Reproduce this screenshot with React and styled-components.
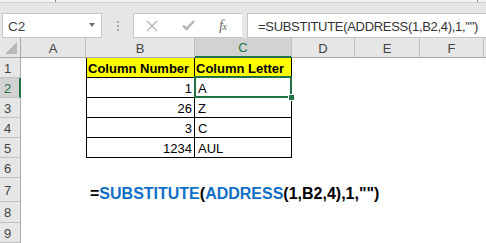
import React from 'react';
import styled, { createGlobalStyle } from 'styled-components';

const GlobalStyle = createGlobalStyle`
  html, body {
    margin: 0;
    padding: 0;
    background: #ffffff;
    overflow: hidden;
  }
  body {
    font-family: "Liberation Sans", Arial, sans-serif;
  }
`;

const GREEN = '#217346';

const Window = styled.div`
  width: 486px;
  height: 243px;
  overflow: hidden;
  display: flex;
  flex-direction: column;
  background: #ffffff;
`;

const TopStrip = styled.div`
  height: 4px;
  background: #f3f3f3;
  border-bottom: 1px solid #d2d2d2;
  display: flex;
  align-items: flex-start;
`;

const Tick = styled.span`
  display: block;
  width: 1px;
  height: 2px;
  background: #8a8a8a;
  margin-left: ${p => p.$at}px;
`;

const FormulaBar = styled.div`
  height: 45px;
  background: #e6e6e6;
  display: flex;
  align-items: flex-start;
  padding-top: 10px;
  box-sizing: border-box;
`;

const NameBox = styled.div`
  margin-left: 2px;
  width: 100px;
  height: 25px;
  box-sizing: border-box;
  background: #ffffff;
  border: 1px solid #c6c6c6;
  display: flex;
  align-items: center;
  justify-content: space-between;
  padding: 1px 6px 0 5px;
  font-size: 13.5px;
  color: #444444;
`;

const DropArrow = styled.span`
  width: 0;
  height: 0;
  border-left: 3.5px solid transparent;
  border-right: 3.5px solid transparent;
  border-top: 4px solid #6b6b6b;
  margin-bottom: 2px;
`;

const Grip = styled.div`
  width: 31px;
  height: 25px;
  display: flex;
  flex-direction: column;
  align-items: center;
  justify-content: center;
  gap: 2px;
  span {
    display: block;
    width: 2px;
    height: 2px;
    background: #a6a6a6;
  }
`;

const FxBox = styled.div`
  width: 109px;
  height: 25px;
  box-sizing: border-box;
  background: #ffffff;
  border: 1px solid #c6c6c6;
  border-right: none;
  display: flex;
  align-items: center;
  gap: 24px;
  padding-left: 12px;
`;

const FxLabel = styled.span`
  font-family: "Liberation Serif", "Times New Roman", serif;
  font-style: italic;
  font-size: 15px;
  color: #6a6a6a;
  letter-spacing: -1px;
  small {
    font-size: 11px;
  }
`;

const FormulaInput = styled.div`
  flex: 1;
  margin-left: 5px;
  height: 25px;
  box-sizing: border-box;
  background: #ffffff;
  border: 1px solid #c6c6c6;
  border-right: none;
  display: flex;
  align-items: center;
  padding: 1px 0 0 10px;
  font-size: 13px;
  letter-spacing: -0.3px;
  color: #333333;
  white-space: nowrap;
`;

const Sheet = styled.div`
  display: grid;
  grid-template-columns: 21px 65px 109px 97px 63px 65px 64px 1fr;
  grid-template-rows: 20px 20px 20px 20px 20px 20px 20px 24px 21px 20px;
  font-size: 13px;
`;

const Corner = styled.div`
  background: #e6e6e6;
  border-right: 1px solid #a8a8a8;
  border-bottom: 1px solid #a8a8a8;
  box-sizing: border-box;
  display: flex;
  align-items: flex-end;
  justify-content: flex-end;
  padding: 0 3px 3px 0;
  &::after {
    content: '';
    width: 0;
    height: 0;
    border-left: 12px solid transparent;
    border-bottom: 12px solid #b8b8b8;
  }
`;

const ColHeader = styled.div`
  background: ${p => (p.$active ? '#d2d2d2' : '#e6e6e6')};
  color: ${p => (p.$active ? GREEN : '#444444')};
  border-right: 1px solid #c0c0c0;
  border-bottom: ${p => (p.$active ? `2px solid ${GREEN}` : '1px solid #a8a8a8')};
  box-sizing: border-box;
  display: flex;
  align-items: center;
  justify-content: center;
  padding-top: 1px;
`;

const RowHeader = styled.div`
  background: ${p => (p.$active ? '#d2d2d2' : '#e6e6e6')};
  color: ${p => (p.$active ? GREEN : '#444444')};
  border-right: ${p => (p.$active ? `2px solid ${GREEN}` : '1px solid #a8a8a8')};
  border-bottom: 1px solid #c0c0c0;
  box-sizing: border-box;
  display: flex;
  align-items: center;
  justify-content: center;
  padding: 1px ${p => (p.$active ? 4 : 5)}px 0 0;
`;

const Cell = styled.div`
  position: relative;
  z-index: ${p => (p.$selected ? 2 : 'auto')};
  box-sizing: border-box;
  display: flex;
  align-items: center;
  justify-content: ${p => (p.$right ? 'flex-end' : 'flex-start')};
  padding: 2px ${p => (p.$right ? 2 : 0)}px 0 ${p => (p.$right ? 0 : p.$bold ? 1 : 3)}px;
  background: ${p => (p.$fill ? '#ffff00' : '#ffffff')};
  font-weight: ${p => (p.$bold ? 700 : 400)};
  color: #000000;
  white-space: nowrap;
  border-left: ${p => (p.$left ? '1px solid #000' : 'none')};
  border-right: ${p => (p.$boxed ? '1px solid #000' : 'none')};
  border-bottom: ${p => (p.$boxed ? '1px solid #000' : 'none')};
`;

const Selection = styled.div`
  position: absolute;
  left: -1px;
  top: -2px;
  right: -1px;
  bottom: -1px;
  border: 2px solid ${GREEN};
  pointer-events: none;
  &::after {
    content: '';
    position: absolute;
    right: -5px;
    bottom: -5px;
    width: 5px;
    height: 5px;
    background: ${GREEN};
    border: 1px solid #ffffff;
  }
`;

const BigFormula = styled.div`
  grid-column: 3 / -1;
  display: flex;
  align-items: center;
  padding: 7px 0 0 4px;
  font-size: 16px;
  font-weight: 700;
  color: #000000;
  white-space: nowrap;
`;

const Fn = styled.span`
  color: #0f6fc6;
`;

const columns = ['A', 'B', 'C', 'D', 'E', 'F', ''];

const data = [
  { num: 'Column Number', letter: 'Column Letter', head: true },
  { num: '1', letter: 'A' },
  { num: '26', letter: 'Z' },
  { num: '3', letter: 'C' },
  { num: '1234', letter: 'AUL' },
];

function Blank({ count }) {
  return Array.from({ length: count }).map((_, i) => <Cell key={i} />);
}

export default function App() {
  return (
    <>
      <GlobalStyle />
      <Window>
        <TopStrip>
          <Tick $at={55} />
          <Tick $at={421} />
        </TopStrip>
        <FormulaBar>
          <NameBox>
            C2
            <DropArrow />
          </NameBox>
          <Grip>
            <span />
            <span />
            <span />
          </Grip>
          <FxBox>
            <svg width="12" height="12" viewBox="0 0 12 12">
              <path d="M1 1 L11 11 M11 1 L1 11" stroke="#b4b4b4" strokeWidth="1.4" fill="none" />
            </svg>
            <svg width="13" height="11" viewBox="0 0 13 11">
              <path d="M1 5.5 L4.5 9 L12 1" stroke="#b4b4b4" strokeWidth="2.4" fill="none" />
            </svg>
            <FxLabel>
              f<small>x</small>
            </FxLabel>
          </FxBox>
          <FormulaInput>=SUBSTITUTE(ADDRESS(1,B2,4),1,"")</FormulaInput>
        </FormulaBar>

        <Sheet>
          <Corner />
          {columns.map((c, i) => (
            <ColHeader key={i} $active={c === 'C'}>
              {c}
            </ColHeader>
          ))}

          {data.map((row, i) => (
            <React.Fragment key={i}>
              <RowHeader $active={i === 1}>{i + 1}</RowHeader>
              <Cell />
              <Cell $left $boxed $right={!row.head} $bold={row.head} $fill={row.head}>
                {row.num}
              </Cell>
              <Cell $boxed $bold={row.head} $fill={row.head} $selected={i === 1}>
                {row.letter}
                {i === 1 && <Selection />}
              </Cell>
              <Blank count={4} />
            </React.Fragment>
          ))}

          <RowHeader>6</RowHeader>
          <Blank count={7} />

          <RowHeader>7</RowHeader>
          <Cell />
          <BigFormula>
            =<Fn>SUBSTITUTE</Fn>(<Fn>ADDRESS</Fn>(1,B2,4),1,"")
          </BigFormula>

          <RowHeader>8</RowHeader>
          <Blank count={7} />

          <RowHeader>9</RowHeader>
          <Blank count={7} />
        </Sheet>
      </Window>
    </>
  );
}
